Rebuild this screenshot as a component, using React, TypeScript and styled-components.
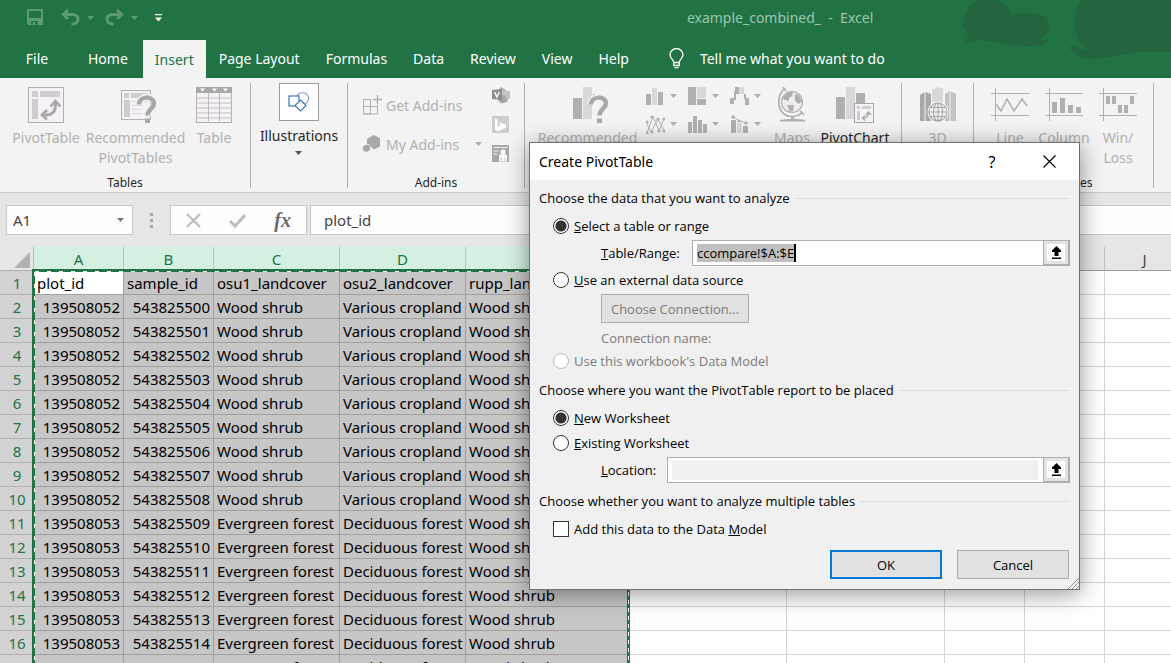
import React from 'react';
import styled, { createGlobalStyle, css } from 'styled-components';

const GREEN = '#217346';
const MID = '#b1b0b1';
const PALE = '#dad7da';

const GlobalStyle = createGlobalStyle`
  * { box-sizing: border-box; }
  html, body { margin: 0; padding: 0; }
  body, button, input, table {
    font-family: "Noto Sans", "Open Sans", sans-serif;
    font-size: 14px;
  }
  button { border: 0; background: none; padding: 0; margin: 0; color: inherit; }
  svg { display: block; flex: none; }
`;

const Window = styled.div`
  position: relative;
  display: flex;
  flex-direction: column;
  height: 100vh;
  overflow: hidden;
  background: #e6e6e6;
`;

/* ---------- title bar and tabs ---------- */

const Header = styled.header`
  position: relative;
  background: ${GREEN};
  color: #fff;
  border-bottom: 1px solid #1c6a3f;
`;
const Clouds = styled.svg`
  position: absolute;
  right: 0;
  top: 0;
`;
const TitleBar = styled.div`
  position: relative;
  display: grid;
  grid-template-columns: 9fr auto 4fr;
  align-items: center;
  height: 40px;
  padding: 0 0 5px 26px;
`;
const QuickAccess = styled.div`
  display: flex;
  align-items: center;
  color: #5d9a76;
`;
const QuickButton = styled.button<{ $gap?: number }>`
  display: flex;
  align-items: center;
  gap: 7px;
  margin-right: ${(p) => p.$gap ?? 14}px;
`;
const FileName = styled.div`
  white-space: pre;
  color: #9cc5ac;
  padding-right: 4px;
`;
const TabRow = styled.nav`
  position: relative;
  display: flex;
  gap: 2px;
  height: 37px;
`;
const Tab = styled.button<{ $active?: boolean; $file?: boolean }>`
  padding: 0 12px;
  color: ${(p) => (p.$active ? GREEN : '#fff')};
  background: ${(p) => (p.$active ? '#f3f3f3' : 'transparent')};
  ${(p) => p.$file && css`width: 74px;`}
  ${(p) => p.$active && css`margin: 0 -1px -1px 1px;`}
`;
const TellMe = styled.button`
  display: flex;
  align-items: center;
  gap: 16px;
  padding-left: 26px;
`;

/* ---------- ribbon ---------- */

const Ribbon = styled.section`
  display: flex;
  height: 115px;
  padding: 5px 0;
  background: #f3f3f3;
  border-bottom: 1px solid #cacaca;
`;
const Group = styled.div<{ $w: number }>`
  display: flex;
  flex-direction: column;
  flex: none;
  width: ${(p) => p.$w}px;
  height: 105px;
  border-right: 1px solid #b2b2b2;
`;
const GroupBody = styled.div<{ $pad?: number; $gap?: number; $center?: boolean }>`
  display: flex;
  flex: 1;
  gap: ${(p) => p.$gap ?? 5}px;
  padding-left: ${(p) => p.$pad ?? 0}px;
  justify-content: ${(p) => (p.$center ? 'center' : 'flex-start')};
`;
const GroupLabel = styled.div`
  height: 16px;
  font-size: 12px;
  line-height: 16px;
  margin-bottom: -3px;
  text-align: center;
  color: #262626;
`;
const BigButton = styled.button<{ $w: number; $on?: boolean }>`
  display: flex;
  flex-direction: column;
  align-items: center;
  align-self: flex-start;
  width: ${(p) => p.$w}px;
  padding-top: 4px;
  color: ${(p) => (p.$on ? '#262626' : MID)};
  line-height: 20px;
  span { margin-top: 5px; white-space: nowrap; }
`;
const GalleryButton = styled.button`
  display: flex;
  flex-direction: column;
  align-items: center;
  align-self: flex-start;
  gap: 5px;
  color: #262626;
  line-height: 20px;
`;
const GalleryFrame = styled.div`
  display: grid;
  place-items: center;
  width: 40px;
  height: 38px;
  background: #fff;
  border: 1px solid #9a9a9a;
`;
const AddInColumn = styled.div`
  display: flex;
  flex-direction: column;
  gap: 19px;
  width: 119px;
  padding-top: 12px;
`;
const LineButton = styled.button`
  display: flex;
  align-items: center;
  gap: 4px;
  height: 20px;
  color: ${MID};
  white-space: nowrap;
  svg:last-child:not(:first-child) { margin-left: auto; }
`;
const IconStack = styled.div`
  display: flex;
  flex-direction: column;
  gap: 12px;
  padding-top: 4px;
`;
const ChartGrid = styled.div`
  display: grid;
  grid-template-columns: 42px 42px 34px;
  grid-auto-rows: 20px;
  gap: 8px 0;
  align-content: start;
  padding-top: 3px;
`;
const ChartButton = styled.button`
  display: flex;
  align-items: center;
  gap: 5px;
`;

/* ---------- formula bar ---------- */

const FormulaBar = styled.section`
  display: flex;
  align-items: flex-start;
  height: 54px;
  flex: none;
  padding: 12px 0 0 6px;
`;
const Box = styled.div<{ $w?: number }>`
  display: flex;
  align-items: center;
  height: 30px;
  background: #fdfdfd;
  border: 1px solid #c6c6c6;
  ${(p) => (p.$w ? css`width: ${p.$w}px;` : css`flex: 1; border-right: 0;`)}
`;
const NameInput = styled.input`
  width: 110px;
  padding: 0 6px;
  border: 0;
  outline: 0;
  background: transparent;
  color: #444;
  font-size: 15px;
`;
const FormulaInput = styled.input`
  flex: 1;
  padding: 0 13px;
  border: 0;
  outline: 0;
  background: transparent;
  color: #444;
  font-size: 15px;
`;
const Dots = styled.div`
  display: flex;
  flex-direction: column;
  gap: 3px;
  width: 37px;
  padding: 8px 0 0 17px;
  i { width: 3px; height: 3px; background: #a8a8a8; }
`;
const FormulaTools = styled(Box)`
  justify-content: space-between;
  padding: 0 15px;
  margin-right: 3px;
`;
const FxButton = styled.button`
  font: italic 700 20px/24px "Liberation Serif", serif;
  color: #6a6a6a;
`;

/* ---------- sheet ---------- */

const Sheet = styled.main`
  position: relative;
  flex: 1;
  overflow: hidden;
`;
const Table = styled.table`
  width: 100%;
  min-width: 1185px;
  table-layout: fixed;
  border-collapse: separate;
  border-spacing: 0;
  font-size: 15px;
  line-height: 21px;
  th, td { height: 24px; padding: 2px 0 0; font-weight: 400; overflow: hidden; white-space: nowrap; }
`;
const Col = styled.col<{ $w?: number }>`
  ${(p) => p.$w && css`width: ${p.$w}px;`}
`;
const ColHead = styled.th<{ $sel?: boolean }>`
  color: ${(p) => (p.$sel ? GREEN : '#444')};
  background: ${(p) => (p.$sel ? '#d3f0e0' : '#e6e6e6')};
  border-right: 1px solid #b9c3bd;
  border-bottom: 1px solid #9b9b9b;
`;
const Corner = styled.th`
  border-right: 1px solid #b9b9b9;
  border-bottom: 1px solid #b0b0b0;
  svg { margin-left: 14px; }
`;
const RowHead = styled.th`
  color: ${GREEN};
  background: #d2d2d2;
  border-bottom: 1px solid #b0b0b0;
`;
const Cell = styled.td<{ $num?: boolean; $sel?: boolean; $active?: boolean }>`
  && { padding: 2px 3px 0; }
  text-align: ${(p) => (p.$num ? 'right' : 'left')};
  color: #000;
  background: ${(p) => (p.$active || !p.$sel ? '#fff' : '#c6c6c6')};
  border-right: 1px solid ${(p) => (p.$sel ? '#a0a0a0' : '#d4d4d4')};
  border-bottom: 1px solid ${(p) => (p.$sel ? '#a0a0a0' : '#d4d4d4')};
`;
const Marquee = styled.div`
  position: absolute;
  left: 32px;
  top: 22px;
  bottom: 0;
  width: 598px;
  pointer-events: none;
  background:
    repeating-linear-gradient(90deg, #fff 0 4px, transparent 4px 12px) 3px 2px / 592px 1px no-repeat,
    repeating-linear-gradient(180deg, #fff 0 4px, transparent 4px 12px) 2px 3px / 1px 100% no-repeat,
    repeating-linear-gradient(180deg, #fff 0 4px, transparent 4px 8px) 596px 3px / 1px 100% no-repeat,
    linear-gradient(${GREEN}, ${GREEN}) 0 0 / 100% 3px no-repeat,
    linear-gradient(${GREEN}, ${GREEN}) 0 0 / 3px 100% no-repeat,
    linear-gradient(${GREEN}, ${GREEN}) 595px 0 / 3px 100% no-repeat;
`;

/* ---------- dialog ---------- */

const Dialog = styled.form`
  position: absolute;
  left: 529px;
  top: 142px;
  width: 551px;
  background: #f0f0f0;
  border: 1px solid #707070;
  box-shadow: 0 4px 22px rgba(0, 0, 0, 0.42);
  color: #000;
`;
const DialogTitle = styled.div`
  display: flex;
  align-items: center;
  height: 37px;
  padding: 0 23px 0 9px;
  background: #fff;
  h1 { flex: 1; margin: 0; font-size: 14px; font-weight: 400; }
`;
const TitleButton = styled.button`
  width: 14px;
  margin-left: 43px;
  font-size: 16px;
  display: grid;
  place-items: center;
`;
const DialogBody = styled.div`
  display: flex;
  flex-direction: column;
  gap: 8px;
  padding: 8px 9px 10px;
  font-family: "Open Sans", sans-serif;
  font-size: 13px;
  line-height: 20px;
`;
const Section = styled.section`
  display: flex;
  flex-direction: column;
  gap: 3px;
  h2 {
    display: flex;
    align-items: center;
    gap: 5px;
    margin: 0 0 4px;
    font-size: 13px;
    font-weight: 400;
    white-space: nowrap;
  }
  h2::after { content: ""; flex: 1; height: 1px; background: #dcdcdc; }
`;
const Choice = styled.label<{ $off?: boolean }>`
  display: flex;
  align-items: center;
  gap: 5px;
  height: 22px;
  padding-left: 14px;
  white-space: pre;
  color: ${(p) => (p.$off ? '#7b7b7b' : '#000')};
`;
const Radio = styled.input`
  appearance: none;
  width: 16px;
  height: 16px;
  margin: 0;
  border: 1px solid #333;
  border-radius: 50%;
  background: #fff;
  &:checked { background: radial-gradient(circle, #333 0 5px, #fff 6px); }
  &:disabled { border-color: #bcbcbc; }
`;
const Check = styled.input`
  appearance: none;
  width: 16px;
  height: 16px;
  margin: 0;
  border: 1px solid #333;
  background: #fff;
`;
const FieldRow = styled.div<{ $label: number }>`
  display: flex;
  align-items: center;
  padding-left: 62px;
  > label { width: ${(p) => p.$label}px; }
`;
const Field = styled.div`
  display: flex;
  align-items: center;
  flex: 1;
  height: 26px;
  padding-left: 4px;
  background: #fff;
  border: 1px solid #abadb3;
`;
const RangeInput = styled.input`
  field-sizing: content;
  height: 18px;
  padding: 0;
  border: 0;
  border-right: 2px solid #000;
  outline: 0;
  background: #c0c0c0;
  font-family: "Open Sans", sans-serif;
  font-size: 13px;
`;
const LocationInput = styled.input`
  flex: 1;
  height: 20px;
  margin-right: 5px;
  border: 0;
  background: #f0f0f0;
`;
const PickButton = styled.button`
  display: grid;
  place-items: center;
  width: 27px;
  height: 26px;
  margin: -1px -1px -1px auto;
  background: #fff;
  border: solid #abadb3;
  border-width: 1px 2px 2px 1px;
  box-shadow: inset 0 0 0 3px #e3e3e3;
`;
const PushButton = styled.button<{ $w: number; $primary?: boolean }>`
  width: ${(p) => p.$w}px;
  height: 29px;
  font-family: "Open Sans", sans-serif;
  font-size: 13px;
  background: #e1e1e1;
  border: ${(p) => (p.$primary ? '2px solid #0078d7' : '1px solid #adadad')};
  &:disabled { color: #7b7b7b; }
`;
const Indent = styled.div`
  height: 29px;
  padding-left: 62px;
`;
const ConnectionName = styled.div`
  height: 21px;
  padding-left: 62px;
  line-height: 24px;
  color: #7b7b7b;
`;
const Footer = styled.div`
  display: flex;
  justify-content: flex-end;
  gap: 15px;
  padding: 2px 1px 0 0;
`;
const Grip = styled.svg`
  position: absolute;
  right: 0;
  bottom: 0;
`;

/* ---------- icons ---------- */

const Arrow = ({ color = MID }: { color?: string }) => (
  <svg width="7" height="4" viewBox="0 0 7 4"><path d="M0 0h7L3.500 4z" fill={color} /></svg>
);
const SaveIcon = () => (
  <svg width="18" height="17" viewBox="0 0 18 17" fill="currentColor">
    <path fillRule="evenodd" d="M1 0h16v16H2.500L1 14.500zM3 2v7h12V2zM5 12v3.500h7V12z" />
    <path d="M7 13h2v3H7z" />
  </svg>
);
const UndoIcon = ({ flip }: { flip?: boolean }) => (
  <svg width="19" height="17" viewBox="0 0 19 17" fill="none" stroke="currentColor">
    <g transform={flip ? 'translate(19 0) scale(-1 1)' : undefined}>
      <path d="M2 5.500h9.500c3.500 0 5.500 2 5.500 4.500s-2 5-5.500 5h-1" strokeWidth="3" />
      <path d="M7 1L2.200 5.500 7 10" strokeWidth="2.600" />
    </g>
  </svg>
);
const BulbIcon = () => (
  <svg width="15" height="21" viewBox="0 0 15 21" fill="none" stroke="#fff" strokeWidth="1.300">
    <path d="M4.800 14.500c0-3-3.800-4-3.800-7.700a6.500 6.200 0 0 1 13 0c0 3.700-3.800 4.700-3.800 7.700z" />
    <path d="M4.800 14.500v3h5.400v-3M5.500 19.700h4" />
  </svg>
);
const PivotIcon = () => (
  <svg width="36" height="36" viewBox="0 0 36 36">
    <rect x=".5" y=".5" width="35" height="35" fill="#f6f1f6" stroke={MID} />
    <path d="M4 4h6v6H4zM12 4h20v6H12zM4 12h6v20H4z" fill="#cfcccf" />
    <path d="M16.500 28C24 28.500 28 25 27.500 16" fill="none" stroke="#a9a8a9" strokeWidth="3" />
    <path d="M22.500 19.500L27.500 14l5 5.500M19 23l-5 5 5 4.500" fill="none" stroke="#a9a8a9" strokeWidth="2.600" />
  </svg>
);
const Question = ({ x, y }: { x: number; y: number }) => (
  <g transform={`translate(${x} ${y})`} fill="none">
    <path d="M2 9.500C2 0 17.500 0 17.500 8.500c0 5-6.500 5.500-6.500 12.500" stroke="#f3f3f3" strokeWidth="7" />
    <path d="M2 9.500C2 .5 17 .5 17 8.500c0 5-6.500 5.500-6.500 12" stroke="#a9a8a9" strokeWidth="4.500" />
    <path d="M8 23.500h5v4.500H8z" fill="#a9a8a9" />
  </g>
);
const RecommendedPivotIcon = () => (
  <svg width="42" height="36" viewBox="-6 0 42 36">
    <rect x=".5" y="3.500" width="29" height="29" fill="#f6f1f6" stroke={MID} />
    <path d="M3 6h5v5H3zM10 6h17v5H10zM3 13h6v17H3z" fill="#cfcccf" />
    <path d="M11 14.500h16M11 18.500h10M11 22.500h10M11 26.500h10" stroke={PALE} />
    <Question x={16} y={8} />
  </svg>
);
const TableIcon = () => (
  <svg width="36" height="36" viewBox="0 0 36 36">
    <rect x=".5" y=".5" width="35" height="35" fill="#f6f1f6" stroke={MID} />
    <path d="M0 0h36v6H0z" fill="#a9a8a9" />
    <path d="M4 1.500h5L6.500 4.500zM16 1.500h5L18.500 4.500zM27 1.500h5L29.500 4.500z" fill="#fff" />
    <path d="M0 11h36M0 16h36M0 21h36M0 26h36M0 31h36M12.500 6v30M23.500 6v30" stroke="#bfbdbf" />
  </svg>
);
const ShapesIcon = () => (
  <svg width="22" height="22" viewBox="0 0 22 22" fill="none" stroke="#3f7ab5" strokeWidth="1.200">
    <circle cx="14.500" cy="7.500" r="6" stroke="#86a9cf" />
    <rect x="1" y="5" width="10" height="10" fill="#fff" />
    <path d="M12.500 9L18 14.500 12.500 20 7 14.500z" fill="#fff" />
  </svg>
);
const StoreIcon = () => (
  <svg width="19" height="20" viewBox="0 0 19 20" fill="none" stroke={MID}>
    <path d="M.5 4.500h7v14.500h-7zM.5 11.500h14v7.500H.500M7.500 11.500v7.500M14.500 11.500V10M.5 4.500h7" />
    <path d="M14.500 0v9M10 4.500h9" strokeWidth="1.300" />
  </svg>
);
const HexIcon = () => (
  <svg width="19" height="18" viewBox="0 0 19 18" fill="#a9a8a9">
    <path d="M10.500 0l6.500 3v8.500l-6 3L8 12 6 9.500 4 9V4z" />
    <path d="M3.500 9.500L7 11v4l-3.500 2L0 15.500v-4z" />
  </svg>
);
const VisioIcon = () => (
  <svg width="18" height="17" viewBox="0 0 18 17">
    <path d="M9 0l5 3v4H6V3zM11 9.500h5v5l-6 2-4-3z" fill="#b5b4b5" />
    <path d="M10 4h8v8h-8z" fill="#c4c3c4" />
    <circle cx="10.500" cy="12" r="4" fill="#a9a8a9" />
    <path d="M0 3l10-1v11L0 12z" fill="#8f8e8f" />
    <path d="M2.500 5l2.500 5 2.200-5" fill="none" stroke="#fff" strokeWidth="1.400" />
  </svg>
);
const BingIcon = () => (
  <svg width="17" height="17" viewBox="0 0 17 17">
    <path d="M0 0h17v17H0z" fill="#cfcccf" />
    <path d="M3 2.500l2.500 1v7.500l3-2L7 6l7 2.800v2.700L6 15.500l-3-2z" fill="#fff" />
  </svg>
);
const PeopleIcon = () => (
  <svg width="17" height="17" viewBox="0 0 17 17">
    <path d="M0 0h17v17H0z" fill="#a9a8a9" />
    <path d="M1.500 2.500h14M1.500 6h5M1.500 9h4" stroke="#f3f3f3" strokeWidth="1.200" />
    <circle cx="11" cy="7" r="2.600" fill="#fff" />
    <path d="M7 16.500V11c0-1 .5-1.500 1.500-1.500h5c1 0 1.500.5 1.500 1.500v5.500z" fill="#fff" />
    <path d="M9 12v4M13 12v4" stroke="#c9c8c9" />
  </svg>
);
const RecommendedChartIcon = () => (
  <svg width="42" height="36" viewBox="-6 0 42 36">
    <path d="M0 11h9v21H0zM20 7h9v6h-9z" fill={MID} />
    <path d="M10 0h9v32h-9z" fill={PALE} />
    <Question x={16} y={8} />
  </svg>
);
const charts: Record<string, React.ReactNode> = {
  column: <><path d="M0 7h5v11H0zM12 5h5v13h-5z" fill={MID} /><path d="M6 1h5v17H6z" fill={PALE} /></>,
  treemap: <><path d="M0 0h8v18H0zM9 12h9v6H9z" fill={MID} /><path d="M9 0h9v11H9z" fill={PALE} /></>,
  waterfall: <><path d="M0 11h4v6H0zM5 0h4v7H5M15 11h4v7h-4zM4 4h2v9H4zM14 7h2v5h-2z" fill={MID} /><path d="M9 0h5v7H9z" fill={PALE} /></>,
  scatter: (
    <g stroke={MID} fill="none">
      <path d="M1 18L7 1l6 15 5-12M0 7l5 10L12 4l6 12" />
      <g fill={MID} stroke="none">
        {[[1, 18], [6, 2], [13, 16], [18, 4], [1, 7], [6, 17], [12, 4], [18, 16]].map(([x, y]) => <circle key={`${x}-${y}`} cx={x} cy={y} r="1.600" />)}
      </g>
    </g>
  ),
  histogram: <path d="M0 7h4v11H0zM5 1h4v17H5zM10 5h4v13h-4zM15 9h4v9h-4z" fill={MID} />,
  combo: <><path d="M1 5h5v13H1zM13 11h5v7h-5z" fill={MID} /><path d="M7 8h5v10H7z" fill={PALE} /><path d="M2 1l6 4 8 3" stroke={MID} fill="none" /><circle cx="3" cy="2" r="1.700" fill={MID} /><circle cx="9" cy="6" r="1.500" fill={MID} /><circle cx="16" cy="8" r="1.700" fill={MID} /></>,
};
const ChartIcon = ({ kind }: { kind: string }) => (
  <svg width="19" height="19" viewBox="0 0 19 19">{charts[kind]}</svg>
);
const GlobeIcon = () => (
  <svg width="28" height="36" viewBox="0 0 28 36">
    <circle cx="14" cy="15" r="10.500" fill="#efebef" stroke={MID} strokeWidth="1.200" />
    <path d="M6 9c3-4 7-5 9-4l-1 4-3 2v3l-4-1-3-2zM17 7l4 1 3 6-3 3-4-3zM9 18h7l-1 6-3 1z" fill={MID} />
    <path d="M6 2C-1 9-1 21 6 27c5 4 14 3 19-2M5 0l3 4M22 24l4 4" fill="none" stroke={MID} strokeWidth="1.700" />
    <path d="M13 29h3v4h-3zM2 33c4-1.500 22-1.500 25 0v1.500H2z" fill={MID} />
  </svg>
);
const PivotChartIcon = () => (
  <svg width="38" height="36" viewBox="0 0 38 36">
    <path d="M0 10h9v22H0zM20 6h9v12h-9z" fill={MID} />
    <path d="M10 0h9v32h-9z" fill={PALE} />
    <rect x="18.500" y="16.500" width="19" height="19" fill="#f6f1f6" stroke="#a9a8a9" />
    <path d="M21 19h3v3h-3zM26 19h9v3h-9zM21 24h3v9h-3z" fill="#cfcccf" />
    <path d="M26.500 31c4.500.500 6-2 6-5M30 28l2.500-3 2.500 3M29 28.500L26.500 31l2.500 2.500" fill="none" stroke="#a9a8a9" strokeWidth="1.300" />
  </svg>
);
const Map3DIcon = () => (
  <svg width="36" height="36" viewBox="0 0 36 36">
    <path d="M0 8l6-3v29H0zM25 7l5-3 6 3v27H25z" fill="#c4c2c4" />
    <path d="M0 8l5-3 6 2v27H0z" fill="#a9a8a9" />
    <path d="M12 3l6-3 5 2v32H12z" fill={PALE} />
    <path d="M5 5v29M30 4v30" stroke="#f3f3f3" />
    <circle cx="18" cy="25" r="10.500" fill="#f3f3f3" />
    <g fill="#f6f1f6" stroke="#a9a8a9" strokeWidth="1.200">
      <circle cx="18" cy="25" r="9" />
      <ellipse cx="18" cy="25" rx="4.500" ry="9" />
      <path d="M18 16v18M9 25h18M10.500 20.500h15M10.500 29.500h15" />
    </g>
  </svg>
);
const SparkIcon = ({ kind }: { kind: 'line' | 'column' | 'winloss' }) => (
  <svg width="38" height="36" viewBox="0 0 38 36">
    <path d="M0 6.500h38M0 28.500h38M4.500 1v33" stroke={MID} fill="none" />
    {kind === 'line' && <path d="M5 17l5 7 6-12 7 12 8-12 5 7" stroke={MID} fill="none" strokeWidth="1.500" />}
    {kind === 'column' && <path d="M7 15h5v11H7zM15 11h5v15h-5zM23 18h5v8h-5zM31 20h5v6h-5z" fill={MID} />}
    {kind === 'winloss' && <path d="M7 9h4v8H7zM13 9h4v8h-4zM19 18h4v8h-4zM25 18h4v8h-4zM31 9h4v8h-4z" fill={MID} />}
  </svg>
);
const PickIcon = () => (
  <svg width="11" height="14" viewBox="0 0 11 14"><path d="M5.500 0L10 4.500V6H7.500v4h-4V6H1V4.500zM1 11.500h9V13H1z" /></svg>
);

/* ---------- data ---------- */

const tabs = ['Home', 'Insert', 'Page Layout', 'Formulas', 'Data', 'Review', 'View', 'Help'];
const columns = [
  { name: 'A', width: 90 }, { name: 'B', width: 90 }, { name: 'C', width: 126 }, { name: 'D', width: 126 },
  { name: 'E', width: 163 }, { name: 'F', width: 158 }, { name: 'G', width: 158 }, { name: 'H', width: 80 },
  { name: 'I', width: 80 }, { name: 'J', width: undefined },
];
const headings = ['plot_id', 'sample_id', 'osu1_landcover', 'osu2_landcover', 'rupp_landcover'];
const records = Array.from({ length: 16 }, (_, i) => {
  const first = i < 9;
  return [
    first ? '139508052' : '139508053',
    String(543825500 + i),
    first ? 'Wood shrub' : 'Evergreen forest',
    first ? 'Various cropland' : 'Deciduous forest',
    'Wood shrub',
  ];
});
const rows = [headings, ...records];

export default function App() {
  return (
    <Window>
      <GlobalStyle />
      <Header>
        <Clouds width="220" height="77" viewBox="0 0 220 77" fill="#246440" aria-hidden="true">
          <path d="M12 26C12 12 20 3 28 0h18c8 3 12 9 15 15 10-3 28-4 35 3 5 9 0 18-9 22h7c4-1 5 0 1 3-10 5-22 4-38 1-14-2-28-5-36-3-4 1-7 3-9 5 0-5 4-7 7-12-4-3-7-4-7-8z" />
          <path d="M130 0c-6 10-8 24-5 32 2 8 7 14 12 18-6 0-11-4-18-4-1 5 7 12 17 13 24 1 36-6 54-7h30V0z" />
        </Clouds>
        <TitleBar>
          <QuickAccess>
            <QuickButton $gap={17} aria-label="Save"><SaveIcon /></QuickButton>
            <QuickButton $gap={11} aria-label="Undo"><UndoIcon /><Arrow color="#5d9a76" /></QuickButton>
            <QuickButton $gap={17} aria-label="Redo"><UndoIcon flip /><Arrow color="#5d9a76" /></QuickButton>
            <QuickButton aria-label="Customize toolbar">
              <svg width="7" height="8" viewBox="0 0 7 8" fill="#fff"><path d="M0 0h7v1.300H0zM0 3.500h7L3.500 7.500z" /></svg>
            </QuickButton>
          </QuickAccess>
          <FileName>{'example_combined_  -  Excel'}</FileName>
        </TitleBar>
        <TabRow>
          <Tab $file>File</Tab>
          {tabs.map((t) => <Tab key={t} $active={t === 'Insert'}>{t}</Tab>)}
          <TellMe><BulbIcon />Tell me what you want to do</TellMe>
        </TabRow>
      </Header>

      <Ribbon>
        <Group $w={251}>
          <GroupBody $pad={12}>
            <BigButton $w={68}><PivotIcon /><span>PivotTable</span></BigButton>
            <BigButton $w={101}><RecommendedPivotIcon /><span>Recommended<br />PivotTables</span></BigButton>
            <BigButton $w={46}><TableIcon /><span>Table</span></BigButton>
          </GroupBody>
          <GroupLabel>Tables</GroupLabel>
        </Group>
        <Group $w={97}>
          <GroupBody $center>
            <GalleryButton><GalleryFrame><ShapesIcon /></GalleryFrame>Illustrations<Arrow color="#555" /></GalleryButton>
          </GroupBody>
        </Group>
        <Group $w={177}>
          <GroupBody $pad={15} $gap={10}>
            <AddInColumn>
              <LineButton><StoreIcon />Get Add-ins</LineButton>
              <LineButton><HexIcon />My Add-ins<Arrow /></LineButton>
            </AddInColumn>
            <IconStack><VisioIcon /><BingIcon /><PeopleIcon /></IconStack>
          </GroupBody>
          <GroupLabel>Add-ins</GroupLabel>
        </Group>
        <Group $w={377}>
          <GroupBody $pad={12} $gap={8}>
            <BigButton $w={101}><RecommendedChartIcon /><span>Recommended</span></BigButton>
            <ChartGrid>
              {Object.keys(charts).map((kind) => (
                <ChartButton key={kind} aria-label={kind}><ChartIcon kind={kind} /><Arrow /></ChartButton>
              ))}
            </ChartGrid>
            <BigButton $w={40}><GlobeIcon /><span>Maps</span></BigButton>
            <BigButton $w={70} $on><PivotChartIcon /><span>PivotChart</span></BigButton>
          </GroupBody>
        </Group>
        <Group $w={72}>
          <GroupBody $center>
            <BigButton $w={40}><Map3DIcon /><span>3D</span></BigButton>
          </GroupBody>
        </Group>
        <Group $w={180}>
          <GroupBody $pad={11} $gap={4}>
            <BigButton $w={50}><SparkIcon kind="line" /><span>Line</span></BigButton>
            <BigButton $w={50}><SparkIcon kind="column" /><span>Column</span></BigButton>
            <BigButton $w={50}><SparkIcon kind="winloss" /><span>Win/<br />Loss</span></BigButton>
          </GroupBody>
          <GroupLabel>Sparklines</GroupLabel>
        </Group>
      </Ribbon>

      <FormulaBar>
        <Box $w={127}><NameInput aria-label="Name box" defaultValue="A1" /><Arrow color="#777" /></Box>
        <Dots><i /><i /><i /></Dots>
        <FormulaTools $w={137}>
          <button aria-label="Cancel entry"><svg width="15" height="15" viewBox="0 0 15 15"><path d="M1 1l13 13M14 1L1 14" stroke="#bdbdbd" strokeWidth="2.200" /></svg></button>
          <button aria-label="Enter"><svg width="17" height="15" viewBox="0 0 17 15"><path d="M1 8l5 5L16 2" stroke="#bdbdbd" strokeWidth="3" fill="none" /></svg></button>
          <FxButton aria-label="Insert function">fx</FxButton>
        </FormulaTools>
        <Box><FormulaInput aria-label="Formula" defaultValue="plot_id" /></Box>
      </FormulaBar>

      <Sheet>
        <Table>
          <colgroup>
            <Col $w={34} />
            {columns.map((c) => <Col key={c.name} $w={c.width} />)}
          </colgroup>
          <thead>
            <tr>
              <Corner><svg width="17" height="16" viewBox="0 0 17 16"><path d="M16 0v16H0z" fill="#b1b1b1" /></svg></Corner>
              {columns.map((c, i) => <ColHead key={c.name} $sel={i < 5}>{c.name}</ColHead>)}
            </tr>
          </thead>
          <tbody>
            {rows.map((row, r) => (
              <tr key={r}>
                <RowHead>{r + 1}</RowHead>
                {columns.map((c, i) => (
                  <Cell key={c.name} $sel={i < 5} $num={r > 0 && i < 2} $active={r === 0 && i === 0}>{row[i]}</Cell>
                ))}
              </tr>
            ))}
          </tbody>
        </Table>
        <Marquee />
      </Sheet>

      <Dialog role="dialog" aria-label="Create PivotTable" onSubmit={(e) => e.preventDefault()}>
        <DialogTitle>
          <h1>Create PivotTable</h1>
          <TitleButton type="button" aria-label="Help">?</TitleButton>
          <TitleButton type="button" aria-label="Close">
            <svg width="13" height="13" viewBox="0 0 13 13"><path d="M.5 .5l12 12M12.500 .5l-12 12" stroke="#000" strokeWidth="1.200" /></svg>
          </TitleButton>
        </DialogTitle>
        <DialogBody>
          <Section>
            <h2>Choose the data that you want to analyze</h2>
            <Choice><Radio type="radio" name="source" defaultChecked /><span><u>S</u>elect a table or range</span></Choice>
            <FieldRow $label={91}>
              <label htmlFor="range"><u>T</u>able/Range:</label>
              <Field>
                <RangeInput id="range" defaultValue="ccompare!$A:$E" />
                <PickButton type="button" aria-label="Pick range"><PickIcon /></PickButton>
              </Field>
            </FieldRow>
            <Choice><Radio type="radio" name="source" /><span><u>U</u>se an external data source</span></Choice>
            <Indent><PushButton type="button" $w={148} disabled>Choose Connection...</PushButton></Indent>
            <ConnectionName>Connection name:</ConnectionName>
            <Choice $off><Radio type="radio" name="source" disabled /><span>Use this workbook's Data Model</span></Choice>
          </Section>
          <Section>
            <h2>Choose where you want the PivotTable report to be placed</h2>
            <Choice><Radio type="radio" name="target" defaultChecked /><span><u>N</u>ew Worksheet</span></Choice>
            <Choice><Radio type="radio" name="target" /><span><u>E</u>xisting Worksheet</span></Choice>
            <FieldRow $label={66}>
              <label htmlFor="location"><u>L</u>ocation:</label>
              <Field>
                <LocationInput id="location" />
                <PickButton type="button" aria-label="Pick location"><PickIcon /></PickButton>
              </Field>
            </FieldRow>
          </Section>
          <Section>
            <h2>Choose whether you want to analyze multiple tables</h2>
            <Choice><Check type="checkbox" /><span>Add this data to the Data <u>M</u>odel</span></Choice>
          </Section>
          <Footer>
            <PushButton $w={112} $primary>OK</PushButton>
            <PushButton type="button" $w={112}>Cancel</PushButton>
          </Footer>
        </DialogBody>
        <Grip width="12" height="12" viewBox="0 0 12 12" stroke="#8e8e8e"><path d="M1 12L12 1M5 12l7-7M9 12l3-3" /></Grip>
      </Dialog>
    </Window>
  );
}
